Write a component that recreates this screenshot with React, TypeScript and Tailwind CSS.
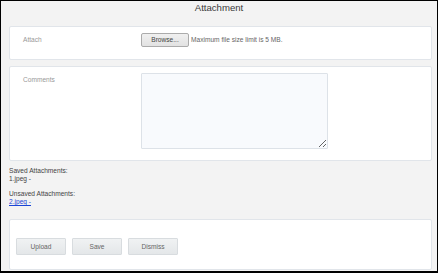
export default function App() {
  return (
    <div className="w-[438px] h-[273px] overflow-hidden border border-b-2 border-black bg-[#f3f3f3] font-['Liberation_Sans',Arial,sans-serif] flex flex-col">
      <h1 className="h-[25px] text-center text-[9.6px] leading-[13px] text-[#3a3a3a]">Attachment</h1>

      <div className="pl-[8px] pr-[5px] flex flex-col">
        {/* attach row */}
        <div className="h-[34px] bg-white border border-[#e1e5ea] rounded-[2px] flex pt-[6px]">
          <div className="w-[131px] pl-[13px] pt-[3px] text-[6.6px] leading-[8px] text-[#999]">Attach</div>
          <button className="w-[48px] h-[14px] border border-[#ababab] rounded-[2px] bg-gradient-to-b from-[#f0f0f0] to-[#e2e2e2] text-[6.6px] leading-[12px] text-[#444]">
            Browse...
          </button>
          <span className="ml-[2px] pt-[3px] text-[6.6px] leading-[8px] text-[#666]">Maximum file size limit is 5 MB.</span>
        </div>

        {/* comments */}
        <div className="mt-[6px] h-[95px] bg-white border border-[#e1e5ea] rounded-[2px] flex pt-[6px]">
          <div className="w-[131px] pl-[13px] pt-[3px] text-[6.6px] leading-[8px] text-[#999]">Comments</div>
          <textarea className="w-[187px] h-[76px] border border-[#dde2e8] bg-[#f8fafd] rounded-[1px] outline-none" />
        </div>

        {/* attachments list */}
        <div className="h-[58px] pt-[6px] text-[6.6px] leading-[8px] text-[#444]">
          <div>Saved Attachments:</div>
          <div>1.jpeg -</div>
          <div className="mt-[7px]">Unsaved Attachments:</div>
          <a href="#" className="text-[#1a44d6] underline">2.jpeg -</a>
        </div>

        {/* actions */}
        <div className="h-[51px] bg-white border border-[#e1e5ea] rounded-[2px] flex gap-[6px] pl-[6px] pt-[18px]">
          {["Upload", "Save", "Dismiss"].map((label) => (
            <button
              key={label}
              className="w-[50px] h-[17px] border border-[#d8dcdf] rounded-[1px] bg-gradient-to-b from-[#f0f2f3] to-[#e4e7e9] text-[6.6px] text-[#666]"
            >
              {label}
            </button>
          ))}
        </div>
      </div>
    </div>
  );
}
